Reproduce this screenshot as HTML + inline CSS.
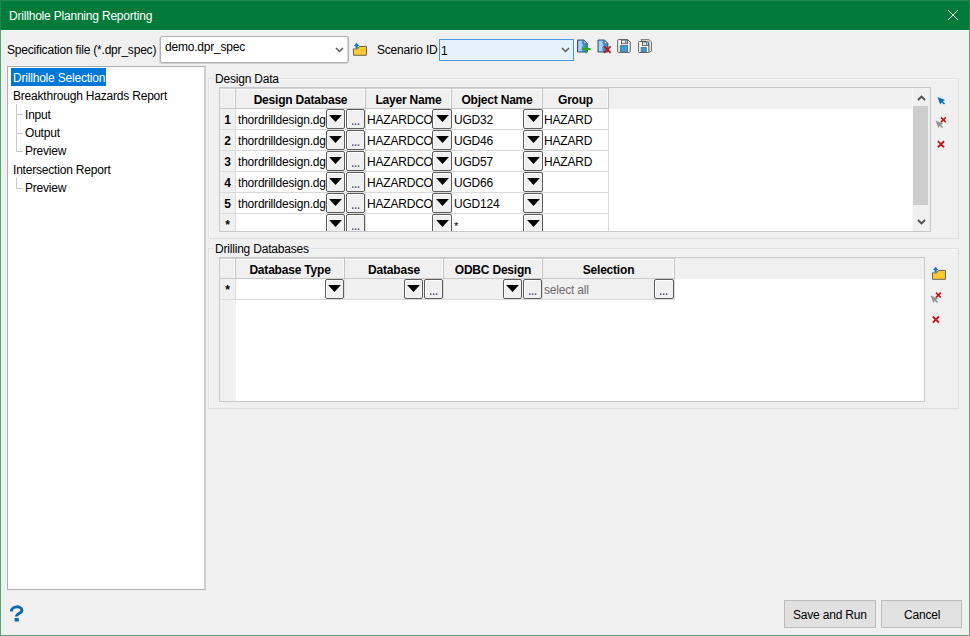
<!DOCTYPE html>
<html><head><meta charset="utf-8">
<style>
html,body{margin:0;padding:0;}
body{width:970px;height:636px;overflow:hidden;position:relative;background:#f0f0f0;font-family:"Liberation Sans",sans-serif;font-size:12px;color:#000;}
div,span,svg{position:absolute;box-sizing:border-box;}
.t{white-space:nowrap;line-height:14px;font-size:12px;letter-spacing:-0.2px;}
.b{font-weight:bold;}
.btn{background:#f0f0f0;border:1px solid #5c5c5c;border-radius:2px;box-shadow:inset 1px 1px 0 #fff;}
.clip{overflow:hidden;}
</style></head><body>

<div style="left:0px;top:0px;width:970px;height:30px;background:#027b3a;"></div>
<div style="left:0px;top:0px;width:970px;height:1px;background:#238853;"></div>
<div style="left:0px;top:30px;width:1px;height:606px;background:#55a677;"></div>
<div style="left:969px;top:30px;width:1px;height:606px;background:#55a677;"></div>
<div style="left:969px;top:0px;width:1px;height:30px;background:#1f8650;"></div>
<div style="left:0px;top:0px;width:1px;height:30px;background:#1f8650;"></div>
<div style="left:0px;top:635px;width:970px;height:1px;background:#55a677;"></div>
<div style="left:1px;top:30px;width:968px;height:1px;background:#fff;"></div>
<span class="t" style="left:9px;top:9px;color:#fff;">Drillhole Planning Reporting</span>
<svg style="left:947px;top:9px" width="12" height="12" viewBox="0 0 12 12"><path d="M1 1L11 11M11 1L1 11" stroke="#f4faf6" stroke-width="0.95"/></svg>
<span class="t" style="left:7px;top:43px;">Specification file (*.dpr_spec)</span>
<div style="left:160px;top:36px;width:189px;height:27px;background:#fff;border:1px solid #b2b2b2;border-radius:2px;box-shadow:-1px 1px 0 #d2d2d2, inset -1px 0 0 #d8d8d8;"></div>
<span class="t" style="left:165px;top:40px;">demo.dpr_spec</span>
<svg style="left:335px;top:47px" width="9" height="6" viewBox="0 0 9 6"><path d="M1 1L4.5 4.5L8 1" stroke="#5c5c5c" stroke-width="1.45" fill="none"/></svg>
<span class="t" style="left:377px;top:43px;">Scenario ID</span>
<div style="left:439px;top:39px;width:135px;height:22px;background:#e5f1fb;border:1px solid #4a98e4;"></div>
<span class="t" style="left:441px;top:44px;">1</span>
<svg style="left:561px;top:47px" width="9" height="6" viewBox="0 0 9 6"><path d="M1 1L4.5 4.5L8 1" stroke="#5c5c5c" stroke-width="1.45" fill="none"/></svg>
<div style="left:7px;top:66px;width:199px;height:524px;background:#fff;border:1px solid #adb0b5;border-right:2px solid #cacdd1;"></div>
<div style="left:11px;top:68px;width:95px;height:18px;background:#0078d7;"></div>
<span class="t" style="left:13px;top:71px;color:#fff;">Drillhole Selection</span>
<span class="t" style="left:13px;top:89px;">Breakthrough Hazards Report</span>
<span class="t" style="left:25px;top:108px;">Input</span>
<span class="t" style="left:25px;top:126px;">Output</span>
<span class="t" style="left:25px;top:144px;">Preview</span>
<span class="t" style="left:13px;top:163px;">Intersection Report</span>
<span class="t" style="left:25px;top:181px;">Preview</span>
<div style="left:16px;top:104px;width:1px;height:48px;background:#c8c8c8;"></div>
<div style="left:17px;top:114px;width:6px;height:1px;background:#c8c8c8;"></div>
<div style="left:17px;top:133px;width:6px;height:1px;background:#c8c8c8;"></div>
<div style="left:17px;top:151px;width:6px;height:1px;background:#c8c8c8;"></div>
<div style="left:16px;top:178px;width:1px;height:11px;background:#c8c8c8;"></div>
<div style="left:17px;top:188px;width:6px;height:1px;background:#c8c8c8;"></div>
<div style="left:208px;top:78px;width:751px;height:161px;border:1px solid #dedede;box-shadow:inset 1px 1px 0 #f8f8f8;"></div>
<div style="left:213px;top:72px;width:67px;height:12px;background:#f0f0f0;"></div>
<span class="t" style="left:215px;top:72px;">Design Data</span>
<div style="left:208px;top:248px;width:751px;height:161px;border:1px solid #dedede;box-shadow:inset 1px 1px 0 #f8f8f8;"></div>
<div style="left:213px;top:242px;width:97px;height:12px;background:#f0f0f0;"></div>
<span class="t" style="left:215px;top:242px;">Drilling Databases</span>
<div style="left:219px;top:87px;width:712px;height:145px;background:#fff;border:1px solid #c6c8cc;"></div>
<div style="left:220px;top:88px;width:710px;height:21px;background:#f0f0f0;"></div>
<div style="left:220px;top:88px;width:15px;height:143px;background:#f0f0f0;"></div>
<div style="left:235px;top:109px;width:1px;height:122px;background:#dadada;"></div>
<div style="left:365px;top:109px;width:1px;height:122px;background:#dadada;"></div>
<div style="left:451px;top:109px;width:1px;height:122px;background:#dadada;"></div>
<div style="left:542px;top:109px;width:1px;height:122px;background:#dadada;"></div>
<div style="left:608px;top:109px;width:1px;height:122px;background:#dadada;"></div>
<div style="left:220px;top:129px;width:389px;height:1px;background:#dadada;"></div>
<div style="left:220px;top:150px;width:389px;height:1px;background:#dadada;"></div>
<div style="left:220px;top:171px;width:389px;height:1px;background:#dadada;"></div>
<div style="left:220px;top:192px;width:389px;height:1px;background:#dadada;"></div>
<div style="left:220px;top:213px;width:389px;height:1px;background:#dadada;"></div>
<div style="left:220px;top:88px;width:389px;height:1px;background:#d2d2d2;"></div>
<div style="left:220px;top:89px;width:388px;height:1px;background:#fbfbfb;"></div>
<div style="left:220px;top:108px;width:389px;height:1px;background:#c8c8c8;"></div>
<div style="left:235px;top:88px;width:1px;height:21px;background:#c4c4c4;"></div>
<div style="left:234px;top:89px;width:1px;height:19px;background:#fbfbfb;"></div>
<div style="left:365px;top:88px;width:1px;height:21px;background:#c4c4c4;"></div>
<div style="left:364px;top:89px;width:1px;height:19px;background:#fbfbfb;"></div>
<div style="left:451px;top:88px;width:1px;height:21px;background:#c4c4c4;"></div>
<div style="left:450px;top:89px;width:1px;height:19px;background:#fbfbfb;"></div>
<div style="left:542px;top:88px;width:1px;height:21px;background:#c4c4c4;"></div>
<div style="left:541px;top:89px;width:1px;height:19px;background:#fbfbfb;"></div>
<div style="left:608px;top:88px;width:1px;height:21px;background:#c4c4c4;"></div>
<div style="left:607px;top:89px;width:1px;height:19px;background:#fbfbfb;"></div>
<div class="t b" style="left:236px;top:93px;width:129px;text-align:center;">Design Database</div>
<div class="t b" style="left:366px;top:93px;width:85px;text-align:center;">Layer Name</div>
<div class="t b" style="left:452px;top:93px;width:90px;text-align:center;">Object Name</div>
<div class="t b" style="left:543px;top:93px;width:65px;text-align:center;">Group</div>
<div class="clip" style="left:220px;top:109px;width:710px;height:122px;">
<div class="t b" style="left:0px;top:4px;width:15px;text-align:center;">1</div>
<div class="clip" style="left:16px;top:0px;width:90px;height:20px;"><span class="t" style="left:2px;top:4px;">thordrilldesign.dgd</span></div>
<div class="clip" style="left:146px;top:0px;width:66px;height:20px;"><span class="t" style="left:1px;top:4px;">HAZARDCONTROL</span></div>
<span class="t" style="left:234px;top:4px;">UGD32</span>
<span class="t" style="left:324px;top:4px;">HAZARD</span>
<div class="btn" style="left:106px;top:0px;width:19px;height:20px;"><svg style="left:2.4px;top:5px" width="13" height="7" viewBox="0 0 13 7"><path d="M0.1 0H12.9L6.5 7Z" fill="#000"/></svg></div>
<div class="btn" style="left:126px;top:0px;width:19px;height:20px;"><svg style="left:0;top:0" width="19" height="20" viewBox="0 0 19 20"><rect x="5.0" y="13.4" width="1.5" height="1.5" fill="#4a4a6a"/><rect x="7.9" y="13.4" width="1.5" height="1.5" fill="#4a4a6a"/><rect x="10.8" y="13.4" width="1.5" height="1.5" fill="#4a4a6a"/></svg></div>
<div class="btn" style="left:212px;top:0px;width:20px;height:20px;"><svg style="left:2.9px;top:5px" width="13" height="7" viewBox="0 0 13 7"><path d="M0.1 0H12.9L6.5 7Z" fill="#000"/></svg></div>
<div class="btn" style="left:303px;top:0px;width:20px;height:20px;"><svg style="left:2.9px;top:5px" width="13" height="7" viewBox="0 0 13 7"><path d="M0.1 0H12.9L6.5 7Z" fill="#000"/></svg></div>
<div class="t b" style="left:0px;top:25px;width:15px;text-align:center;">2</div>
<div class="clip" style="left:16px;top:21px;width:90px;height:20px;"><span class="t" style="left:2px;top:4px;">thordrilldesign.dgd</span></div>
<div class="clip" style="left:146px;top:21px;width:66px;height:20px;"><span class="t" style="left:1px;top:4px;">HAZARDCONTROL</span></div>
<span class="t" style="left:234px;top:25px;">UGD46</span>
<span class="t" style="left:324px;top:25px;">HAZARD</span>
<div class="btn" style="left:106px;top:21px;width:19px;height:20px;"><svg style="left:2.4px;top:5px" width="13" height="7" viewBox="0 0 13 7"><path d="M0.1 0H12.9L6.5 7Z" fill="#000"/></svg></div>
<div class="btn" style="left:126px;top:21px;width:19px;height:20px;"><svg style="left:0;top:0" width="19" height="20" viewBox="0 0 19 20"><rect x="5.0" y="13.4" width="1.5" height="1.5" fill="#4a4a6a"/><rect x="7.9" y="13.4" width="1.5" height="1.5" fill="#4a4a6a"/><rect x="10.8" y="13.4" width="1.5" height="1.5" fill="#4a4a6a"/></svg></div>
<div class="btn" style="left:212px;top:21px;width:20px;height:20px;"><svg style="left:2.9px;top:5px" width="13" height="7" viewBox="0 0 13 7"><path d="M0.1 0H12.9L6.5 7Z" fill="#000"/></svg></div>
<div class="btn" style="left:303px;top:21px;width:20px;height:20px;"><svg style="left:2.9px;top:5px" width="13" height="7" viewBox="0 0 13 7"><path d="M0.1 0H12.9L6.5 7Z" fill="#000"/></svg></div>
<div class="t b" style="left:0px;top:46px;width:15px;text-align:center;">3</div>
<div class="clip" style="left:16px;top:42px;width:90px;height:20px;"><span class="t" style="left:2px;top:4px;">thordrilldesign.dgd</span></div>
<div class="clip" style="left:146px;top:42px;width:66px;height:20px;"><span class="t" style="left:1px;top:4px;">HAZARDCONTROL</span></div>
<span class="t" style="left:234px;top:46px;">UGD57</span>
<span class="t" style="left:324px;top:46px;">HAZARD</span>
<div class="btn" style="left:106px;top:42px;width:19px;height:20px;"><svg style="left:2.4px;top:5px" width="13" height="7" viewBox="0 0 13 7"><path d="M0.1 0H12.9L6.5 7Z" fill="#000"/></svg></div>
<div class="btn" style="left:126px;top:42px;width:19px;height:20px;"><svg style="left:0;top:0" width="19" height="20" viewBox="0 0 19 20"><rect x="5.0" y="13.4" width="1.5" height="1.5" fill="#4a4a6a"/><rect x="7.9" y="13.4" width="1.5" height="1.5" fill="#4a4a6a"/><rect x="10.8" y="13.4" width="1.5" height="1.5" fill="#4a4a6a"/></svg></div>
<div class="btn" style="left:212px;top:42px;width:20px;height:20px;"><svg style="left:2.9px;top:5px" width="13" height="7" viewBox="0 0 13 7"><path d="M0.1 0H12.9L6.5 7Z" fill="#000"/></svg></div>
<div class="btn" style="left:303px;top:42px;width:20px;height:20px;"><svg style="left:2.9px;top:5px" width="13" height="7" viewBox="0 0 13 7"><path d="M0.1 0H12.9L6.5 7Z" fill="#000"/></svg></div>
<div class="t b" style="left:0px;top:67px;width:15px;text-align:center;">4</div>
<div class="clip" style="left:16px;top:63px;width:90px;height:20px;"><span class="t" style="left:2px;top:4px;">thordrilldesign.dgd</span></div>
<div class="clip" style="left:146px;top:63px;width:66px;height:20px;"><span class="t" style="left:1px;top:4px;">HAZARDCONTROL</span></div>
<span class="t" style="left:234px;top:67px;">UGD66</span>
<span class="t" style="left:324px;top:67px;"></span>
<div class="btn" style="left:106px;top:63px;width:19px;height:20px;"><svg style="left:2.4px;top:5px" width="13" height="7" viewBox="0 0 13 7"><path d="M0.1 0H12.9L6.5 7Z" fill="#000"/></svg></div>
<div class="btn" style="left:126px;top:63px;width:19px;height:20px;"><svg style="left:0;top:0" width="19" height="20" viewBox="0 0 19 20"><rect x="5.0" y="13.4" width="1.5" height="1.5" fill="#4a4a6a"/><rect x="7.9" y="13.4" width="1.5" height="1.5" fill="#4a4a6a"/><rect x="10.8" y="13.4" width="1.5" height="1.5" fill="#4a4a6a"/></svg></div>
<div class="btn" style="left:212px;top:63px;width:20px;height:20px;"><svg style="left:2.9px;top:5px" width="13" height="7" viewBox="0 0 13 7"><path d="M0.1 0H12.9L6.5 7Z" fill="#000"/></svg></div>
<div class="btn" style="left:303px;top:63px;width:20px;height:20px;"><svg style="left:2.9px;top:5px" width="13" height="7" viewBox="0 0 13 7"><path d="M0.1 0H12.9L6.5 7Z" fill="#000"/></svg></div>
<div class="t b" style="left:0px;top:88px;width:15px;text-align:center;">5</div>
<div class="clip" style="left:16px;top:84px;width:90px;height:20px;"><span class="t" style="left:2px;top:4px;">thordrilldesign.dgd</span></div>
<div class="clip" style="left:146px;top:84px;width:66px;height:20px;"><span class="t" style="left:1px;top:4px;">HAZARDCONTROL</span></div>
<span class="t" style="left:234px;top:88px;">UGD124</span>
<span class="t" style="left:324px;top:88px;"></span>
<div class="btn" style="left:106px;top:84px;width:19px;height:20px;"><svg style="left:2.4px;top:5px" width="13" height="7" viewBox="0 0 13 7"><path d="M0.1 0H12.9L6.5 7Z" fill="#000"/></svg></div>
<div class="btn" style="left:126px;top:84px;width:19px;height:20px;"><svg style="left:0;top:0" width="19" height="20" viewBox="0 0 19 20"><rect x="5.0" y="13.4" width="1.5" height="1.5" fill="#4a4a6a"/><rect x="7.9" y="13.4" width="1.5" height="1.5" fill="#4a4a6a"/><rect x="10.8" y="13.4" width="1.5" height="1.5" fill="#4a4a6a"/></svg></div>
<div class="btn" style="left:212px;top:84px;width:20px;height:20px;"><svg style="left:2.9px;top:5px" width="13" height="7" viewBox="0 0 13 7"><path d="M0.1 0H12.9L6.5 7Z" fill="#000"/></svg></div>
<div class="btn" style="left:303px;top:84px;width:20px;height:20px;"><svg style="left:2.9px;top:5px" width="13" height="7" viewBox="0 0 13 7"><path d="M0.1 0H12.9L6.5 7Z" fill="#000"/></svg></div>
<div class="t b" style="left:0px;top:109px;width:15px;text-align:center;">*</div>
<span class="t" style="left:234px;top:110px;font-size:11px;">*</span>
<div class="btn" style="left:106px;top:105px;width:19px;height:20px;"><svg style="left:2.4px;top:5px" width="13" height="7" viewBox="0 0 13 7"><path d="M0.1 0H12.9L6.5 7Z" fill="#000"/></svg></div>
<div class="btn" style="left:126px;top:105px;width:19px;height:20px;"><svg style="left:0;top:0" width="19" height="20" viewBox="0 0 19 20"><rect x="5.0" y="13.4" width="1.5" height="1.5" fill="#4a4a6a"/><rect x="7.9" y="13.4" width="1.5" height="1.5" fill="#4a4a6a"/><rect x="10.8" y="13.4" width="1.5" height="1.5" fill="#4a4a6a"/></svg></div>
<div class="btn" style="left:212px;top:105px;width:20px;height:20px;"><svg style="left:2.9px;top:5px" width="13" height="7" viewBox="0 0 13 7"><path d="M0.1 0H12.9L6.5 7Z" fill="#000"/></svg></div>
<div class="btn" style="left:303px;top:105px;width:20px;height:20px;"><svg style="left:2.9px;top:5px" width="13" height="7" viewBox="0 0 13 7"><path d="M0.1 0H12.9L6.5 7Z" fill="#000"/></svg></div>
</div>
<div style="left:912px;top:88px;width:18px;height:143px;background:#f0f0f0;border-left:1px solid #fafafa;"></div>
<div style="left:913px;top:106px;width:15px;height:99px;background:#cdcdcd;"></div>
<svg style="left:916.5px;top:94.8px" width="9" height="6" viewBox="0 0 9 6"><path d="M1 5L4.5 1.5L8 5" stroke="#505050" stroke-width="1.9" fill="none"/></svg>
<svg style="left:916.5px;top:219.2px" width="9" height="6" viewBox="0 0 9 6"><path d="M1 1L4.5 4.5L8 1" stroke="#505050" stroke-width="1.9" fill="none"/></svg>
<div style="left:219px;top:257px;width:706px;height:145px;background:#fff;border:1px solid #c6c8cc;"></div>
<div style="left:220px;top:258px;width:704px;height:21px;background:#f0f0f0;"></div>
<div style="left:220px;top:258px;width:16px;height:143px;background:#f0f0f0;"></div>
<div style="left:345px;top:279px;width:98px;height:20px;background:#f0f0f0;"></div>
<div style="left:444px;top:279px;width:98px;height:20px;background:#f0f0f0;"></div>
<div style="left:543px;top:279px;width:131px;height:20px;background:#f0f0f0;"></div>
<div style="left:235px;top:279px;width:1px;height:21px;background:#dadada;"></div>
<div style="left:344px;top:279px;width:1px;height:21px;background:#dadada;"></div>
<div style="left:443px;top:279px;width:1px;height:21px;background:#dadada;"></div>
<div style="left:542px;top:279px;width:1px;height:21px;background:#dadada;"></div>
<div style="left:674px;top:279px;width:1px;height:21px;background:#dadada;"></div>
<div style="left:220px;top:299px;width:455px;height:1px;background:#dadada;"></div>
<div style="left:220px;top:258px;width:455px;height:1px;background:#d2d2d2;"></div>
<div style="left:220px;top:259px;width:454px;height:1px;background:#fbfbfb;"></div>
<div style="left:220px;top:278px;width:455px;height:1px;background:#c8c8c8;"></div>
<div style="left:235px;top:258px;width:1px;height:21px;background:#c4c4c4;"></div>
<div style="left:234px;top:259px;width:1px;height:19px;background:#fbfbfb;"></div>
<div style="left:344px;top:258px;width:1px;height:21px;background:#c4c4c4;"></div>
<div style="left:343px;top:259px;width:1px;height:19px;background:#fbfbfb;"></div>
<div style="left:443px;top:258px;width:1px;height:21px;background:#c4c4c4;"></div>
<div style="left:442px;top:259px;width:1px;height:19px;background:#fbfbfb;"></div>
<div style="left:542px;top:258px;width:1px;height:21px;background:#c4c4c4;"></div>
<div style="left:541px;top:259px;width:1px;height:19px;background:#fbfbfb;"></div>
<div style="left:674px;top:258px;width:1px;height:21px;background:#c4c4c4;"></div>
<div style="left:673px;top:259px;width:1px;height:19px;background:#fbfbfb;"></div>
<div class="t b" style="left:236px;top:263px;width:108px;text-align:center;">Database Type</div>
<div class="t b" style="left:345px;top:263px;width:98px;text-align:center;">Database</div>
<div class="t b" style="left:444px;top:263px;width:98px;text-align:center;">ODBC Design</div>
<div class="t b" style="left:543px;top:263px;width:131px;text-align:center;">Selection</div>
<div class="t b" style="left:220px;top:283px;width:15px;text-align:center;">*</div>
<div class="btn" style="left:325px;top:279px;width:19px;height:20px;"><svg style="left:2.4px;top:5px" width="13" height="7" viewBox="0 0 13 7"><path d="M0.1 0H12.9L6.5 7Z" fill="#000"/></svg></div>
<div class="btn" style="left:404px;top:279px;width:19px;height:20px;"><svg style="left:2.4px;top:5px" width="13" height="7" viewBox="0 0 13 7"><path d="M0.1 0H12.9L6.5 7Z" fill="#000"/></svg></div>
<div class="btn" style="left:424px;top:279px;width:19px;height:20px;"><svg style="left:0;top:0" width="19" height="20" viewBox="0 0 19 20"><rect x="5.0" y="13.4" width="1.5" height="1.5" fill="#4a4a6a"/><rect x="7.9" y="13.4" width="1.5" height="1.5" fill="#4a4a6a"/><rect x="10.8" y="13.4" width="1.5" height="1.5" fill="#4a4a6a"/></svg></div>
<div class="btn" style="left:503px;top:279px;width:19px;height:20px;"><svg style="left:2.4px;top:5px" width="13" height="7" viewBox="0 0 13 7"><path d="M0.1 0H12.9L6.5 7Z" fill="#000"/></svg></div>
<div class="btn" style="left:523px;top:279px;width:19px;height:20px;"><svg style="left:0;top:0" width="19" height="20" viewBox="0 0 19 20"><rect x="5.0" y="13.4" width="1.5" height="1.5" fill="#4a4a6a"/><rect x="7.9" y="13.4" width="1.5" height="1.5" fill="#4a4a6a"/><rect x="10.8" y="13.4" width="1.5" height="1.5" fill="#4a4a6a"/></svg></div>
<span class="t" style="left:544px;top:283px;color:#6d6d6d;">select all</span>
<div class="btn" style="left:654px;top:279px;width:20px;height:20px;"><svg style="left:0;top:0" width="20" height="20" viewBox="0 0 20 20"><rect x="5.0" y="13.4" width="1.5" height="1.5" fill="#4a4a6a"/><rect x="7.9" y="13.4" width="1.5" height="1.5" fill="#4a4a6a"/><rect x="10.8" y="13.4" width="1.5" height="1.5" fill="#4a4a6a"/></svg></div>
<div style="left:784px;top:600px;width:92px;height:28px;background:#e1e1e1;border:1px solid #bcbcbc;"></div>
<span class="t" style="left:793px;top:608px;">Save and Run</span>
<div style="left:881px;top:600px;width:81px;height:28px;background:#e1e1e1;border:1px solid #bcbcbc;"></div>
<span class="t" style="left:904px;top:608px;">Cancel</span>
<svg style="left:0;top:590px" width="40" height="40" viewBox="0 590 40 40"><path d="M11.3 611.6 C11.3 605.6 22 605.2 22 610.6 C22 613.4 16.5 613.2 16.5 616.6" stroke="#0b6aa7" stroke-width="2.9" fill="none"/><rect x="14.6" y="618" width="4.2" height="3.5" fill="#0b6aa7"/></svg>
<svg style="left:0;top:0" width="970" height="636" viewBox="0 0 970 636">
<path d="M353.3 48.9 L357.6 48.9 L359.2 46.6 L366.5 46.4 L366.4 55.3 L353.6 55.3 Z" fill="#fcc934" stroke="#6e6650" stroke-width="1"/><path d="M353.9 45.9 L356.6 42.8 L359.3 45.9 L357.7 45.9 L357.7 48.5 L355.5 48.5 L355.5 45.9 Z" fill="#1277bd"/>
<path d="M932.3 272.9 L936.6 272.9 L938.2 270.6 L945.5 270.4 L945.4 279.3 L932.6 279.3 Z" fill="#fcc934" stroke="#6e6650" stroke-width="1"/><path d="M932.9 269.9 L935.6 266.8 L938.3 269.9 L936.7 269.9 L936.7 272.5 L934.5 272.5 L934.5 269.9 Z" fill="#1277bd"/>
<path d="M577.5 40.0 L584 40.0 L587.3 43.3 L587.3 52.0 L577.5 52.0 Z" fill="#3a93d0" stroke="#34506a" stroke-width="1"/><path d="M578.2 40.7 L582.6 40.7 L581.6 43.1 L583.2 45.1 L581.6 47.7 L582.4 51.3 L578.2 51.3 Z" fill="#a6d1ef"/><path d="M584 40.5 L584 43.3 L586.8 43.3 Z" fill="#f4f4f4" stroke="#6a6a6a" stroke-width="0.7"/>
<path d="M581.8 48.9H590.7M586.2 44.9V53.3" stroke="#3aa02f" stroke-width="2"/>
<path d="M598.0 40.0 L604.5 40.0 L607.8 43.3 L607.8 52.0 L598.0 52.0 Z" fill="#3a93d0" stroke="#34506a" stroke-width="1"/><path d="M598.7 40.7 L603.1 40.7 L602.1 43.1 L603.7 45.1 L602.1 47.7 L602.9 51.3 L598.7 51.3 Z" fill="#a6d1ef"/><path d="M604.5 40.5 L604.5 43.3 L607.3 43.3 Z" fill="#f4f4f4" stroke="#6a6a6a" stroke-width="0.7"/>
<path d="M604.6999999999999 47.0L609.9 52.2M609.9 47.0L604.6999999999999 52.2" stroke="#c4161f" stroke-width="1.9" stroke-linecap="square"/>
<path d="M617.7 40.6 Q617.7 39.6 618.7 39.6 L627.7 39.6 L630.2 42.1 L630.2 51.400000000000006 Q630.2 52.400000000000006 629.2 52.400000000000006 L618.7 52.400000000000006 Q617.7 52.400000000000006 617.7 51.400000000000006 Z" fill="#fff" stroke="#5a5a5a" stroke-width="1"/><rect x="621.5" y="40.1" width="6" height="3.6" fill="#e8e8e8" stroke="#555" stroke-width="0.9"/><rect x="625.2" y="40.7" width="1.2" height="2.2" fill="#1a7ac0"/><rect x="620.2" y="45.6" width="7.5" height="6.300000000000001" fill="#3d9ad3" stroke="#4a6e88" stroke-width="0.8"/>
<path d="M641 39.6 L649 39.6 L651.5 42 L651.5 51 L649 52.5 Z" fill="#ddd" stroke="#5a5a5a" stroke-width="0.8"/>
<path d="M638.6 42.5 Q638.6 41.5 639.6 41.5 L646.3000000000001 41.5 L648.8000000000001 44 L648.8000000000001 51.5 Q648.8000000000001 52.5 647.8000000000001 52.5 L639.6 52.5 Q638.6 52.5 638.6 51.5 Z" fill="#fff" stroke="#5a5a5a" stroke-width="1"/><rect x="642.4" y="42" width="6" height="3.6" fill="#e8e8e8" stroke="#555" stroke-width="0.9"/><rect x="646.1" y="42.6" width="1.2" height="2.2" fill="#1a7ac0"/><rect x="641.1" y="47.5" width="5.199999999999999" height="4.5" fill="#3d9ad3" stroke="#4a6e88" stroke-width="0.8"/>
<path d="M937.50 97.00 L945.10 100.00 L942.80 101.50 L945.10 103.60 L944.00 104.50 L941.60 102.40 L940.20 104.60 Z" fill="#0a6fb0"/>
<path d="M935.60 120.50 L943.20 123.50 L940.90 125.00 L943.20 127.10 L942.10 128.00 L939.70 125.90 L938.30 128.10 Z" fill="#959595"/>
<path d="M941.6 118.0L945.1999999999999 121.6M945.1999999999999 118.0L941.6 121.6" stroke="#c4161f" stroke-width="1.7" stroke-linecap="square"/>
<path d="M938.6 141.79999999999998L943.4 146.6M943.4 141.79999999999998L938.6 146.6" stroke="#c4161f" stroke-width="1.9" stroke-linecap="square"/>
<path d="M930.60 295.50 L938.20 298.50 L935.90 300.00 L938.20 302.10 L937.10 303.00 L934.70 300.90 L933.30 303.10 Z" fill="#959595"/>
<path d="M936.6 293.3L940.1999999999999 296.90000000000003M940.1999999999999 293.3L936.6 296.90000000000003" stroke="#c4161f" stroke-width="1.7" stroke-linecap="square"/>
<path d="M933.5 317.20000000000005L938.3 322.0M938.3 317.20000000000005L933.5 322.0" stroke="#c4161f" stroke-width="1.9" stroke-linecap="square"/>
</svg>
</body></html>
